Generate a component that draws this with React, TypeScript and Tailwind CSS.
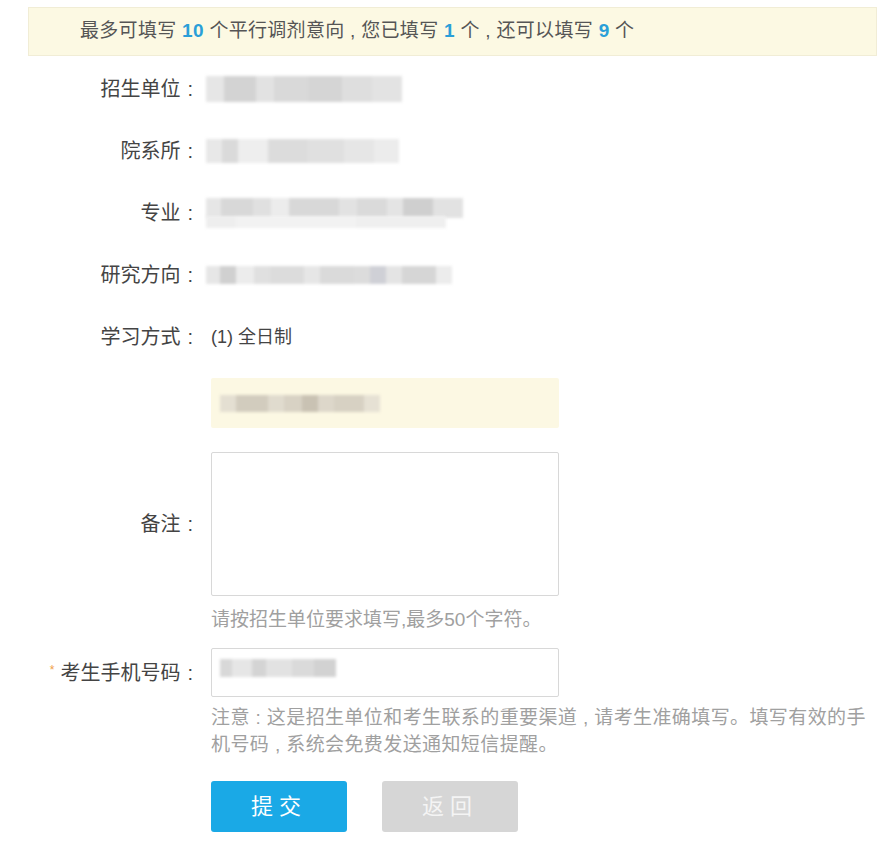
import React from "react";

type Seg = [number, string];

function Blur({ segs, h, className = "" }: { segs: Seg[]; h: number; className?: string }) {
  return (
    <div className={`flex blur-[1.5px] ${className}`} style={{ height: h }}>
      {segs.map(([w, c], i) => (
        <div key={i} style={{ width: w, background: c }} />
      ))}
    </div>
  );
}

const font = { fontFamily: '"Liberation Sans", "Noto Sans CJK SC", sans-serif' };

function Label({ text, star = false }: { text: string; star?: boolean }) {
  return (
    <div className="flex w-[171px] shrink-0 items-center justify-end pr-[6px] text-[20px] text-[#444]">
      {star && <span className="mr-[6px] mt-[-6px] text-[12px] text-[#f0a048]">*</span>}
      <span>{text}</span>
      <span className="ml-[7px]">:</span>
    </div>
  );
}

function Row({ label, children, h = "h-[62px]" }: { label: string; children: React.ReactNode; h?: string }) {
  return (
    <div className={`flex items-center ${h}`}>
      <Label text={label} />
      <div className="ml-[12px] flex items-center">{children}</div>
    </div>
  );
}

export default function App() {
  return (
    <div className="min-h-[844px] w-[879px] bg-white pl-[28px] pt-[7px]" style={font}>
      <div className="flex h-[49px] w-[849px] items-center border border-[#f1edd6] bg-[#fcf9e3] pl-[51px] text-[19px] tracking-[0.3px] text-[#555]">
        <span>
          最多可填写 <b className="text-[#2a9fd8]">10</b> 个平行调剂意向 , 您已填写 <b className="text-[#2a9fd8]">1</b> 个 , 还可以填写{" "}
          <b className="text-[#2a9fd8]">9</b> 个
        </span>
      </div>

      <div className="mt-[2px]">
        <Row label="招生单位">
          <Blur
            h={26}
            className="-ml-[5px] rounded-[6px]"
            segs={[
              [18, "#e6e6e6"],
              [32, "#d3d3d3"],
              [18, "#e2e2e2"],
              [34, "#d9d9d9"],
              [34, "#d5d5d5"],
              [30, "#dedede"],
              [30, "#e3e3e3"],
            ]}
          />
        </Row>
        <Row label="院系所">
          <Blur
            h={24}
            className="-ml-[5px] rounded-[6px]"
            segs={[
              [16, "#e8e8e8"],
              [16, "#dadada"],
              [30, "#eeeeee"],
              [40, "#dcdcdc"],
              [36, "#e0e0e0"],
              [30, "#e6e6e6"],
              [25, "#ececec"],
            ]}
          />
        </Row>
        <Row label="专业">
          <div className="flex flex-col">
            <Blur
              h={20}
              className="-ml-[5px] rounded-[6px]"
              segs={[
                [15, "#e6e6e6"],
                [32, "#d8d8d8"],
                [18, "#e0e0e0"],
                [18, "#ececec"],
                [50, "#d8d8d8"],
                [18, "#e2e2e2"],
                [30, "#dadada"],
                [16, "#e4e4e4"],
                [30, "#cfcfcf"],
                [30, "#e2e2e2"],
              ]}
            />
            <Blur
              h={12}
              className="-ml-[5px] mt-[-2px] w-[240px] rounded-[6px]"
              segs={[
                [30, "#eeeeee"],
                [120, "#f2f2f2"],
                [90, "#efefef"],
              ]}
            />
          </div>
        </Row>
        <Row label="研究方向">
          <Blur
            h={18}
            className="-ml-[5px] rounded-[6px]"
            segs={[
              [14, "#e6e6e6"],
              [16, "#d0d0d0"],
              [18, "#ececec"],
              [16, "#e0e0e0"],
              [34, "#dcdcdc"],
              [16, "#e6e6e6"],
              [34, "#dadada"],
              [16, "#dcdcdc"],
              [16, "#cfd0d6"],
              [16, "#e4e4e4"],
              [34, "#d6d6d6"],
              [16, "#ececec"],
            ]}
          />
        </Row>
        <Row label="学习方式">
          <span className="text-[18px] text-[#444]">(1) 全日制</span>
        </Row>
      </div>

      <div className="ml-[183px] mt-[10px] flex h-[50px] w-[348px] items-center rounded-[2px] bg-[#fcf8e3] pl-[9px]">
        <Blur
          h={17}
          segs={[
            [16, "#e4dfd2"],
            [32, "#d2ccbe"],
            [16, "#e0dbce"],
            [18, "#d8d2c4"],
            [16, "#c9c2b3"],
            [16, "#ddd7ca"],
            [30, "#d7d1c3"],
            [16, "#e6e1d4"],
          ]}
        />
      </div>

      <div className="mt-[24px] flex items-center">
        <Label text="备注" />
        <div className="ml-[12px] h-[144px] w-[348px] rounded-[2px] border border-[#d8d8d8] bg-white" />
      </div>
      <div className="ml-[183px] mt-[12px] text-[19px] leading-[24px] text-[#a0a0a0]">
        请按招生单位要求填写,最多50个字符。
      </div>

      <div className="mt-[16px] flex items-center">
        <Label text="考生手机号码" star />
        <div className="ml-[12px] flex h-[49px] w-[348px] items-center rounded-[2px] border border-[#d8d8d8] bg-white pl-[8px]">
          <Blur
            h={18}
            className="mt-[-10px]"
            segs={[
              [12, "#d8d8d8"],
              [20, "#e6e6e6"],
              [14, "#d4d4d4"],
              [26, "#e2e2e2"],
              [22, "#dadada"],
              [22, "#d2d2d2"],
            ]}
          />
        </div>
      </div>
      <div className="ml-[183px] mt-[7px] w-[660px] text-[19px] leading-[27px] tracking-[0.4px] text-[#a0a0a0]">
        注意 : 这是招生单位和考生联系的重要渠道 , 请考生准确填写。填写有效的手机号码 , 系统会免费发送通知短信提醒。
      </div>

      <div className="ml-[183px] mt-[23px] flex gap-[35px]">
        <button className="h-[51px] w-[136px] rounded-[3px] bg-[#1aa9e6] text-[22px] tracking-[6px] text-white">
          提交
        </button>
        <button className="h-[51px] w-[136px] rounded-[3px] bg-[#d6d6d6] text-[22px] tracking-[6px] text-[#f4f4f4]">
          返回
        </button>
      </div>
    </div>
  );
}
